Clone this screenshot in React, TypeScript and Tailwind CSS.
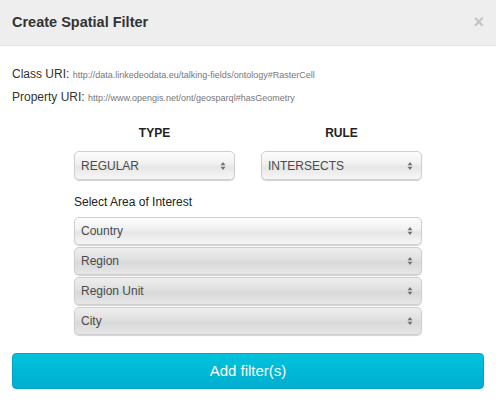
const font = { fontFamily: '"Liberation Sans", Arial, sans-serif' };

function Arrows() {
  return (
    <svg width="6" height="10" viewBox="0 0 6 10" className="shrink-0">
      <path d="M3 1 L5.4 4.2 L0.6 4.2 Z" fill="#707070" />
      <path d="M3 9 L5.4 5.8 L0.6 5.8 Z" fill="#707070" />
    </svg>
  );
}

function FakeSelect({ label, light = false, height = 'h-[28px]' }: { label: string; light?: boolean; height?: string }) {
  return (
    <div
      className={`${height} flex items-center justify-between pl-[6px] pr-[8px] rounded-[5px] border border-[#cfcfcf] shadow-[0_1px_1px_rgba(0,0,0,0.18)] ${
        light
          ? 'bg-[linear-gradient(#fdfdfd,#f0f0f0_45%,#e6e6e6_55%,#f6f6f6)]'
          : 'bg-[linear-gradient(#eeeeee,#e0e0e0_45%,#d9d9d9_55%,#e6e6e6)]'
      }`}
    >
      <span className="text-[12px] text-[#4a4a4a]">{label}</span>
      <Arrows />
    </div>
  );
}

export default function App() {
  return (
    <div className="w-[496px] h-[402px] bg-white text-[#333]" style={font}>
      {/* Header */}
      <div className="h-[46px] bg-[#eeeeee] border-b border-[#e2e2e2] flex items-center justify-between pl-3 pr-[12px]">
        <h2 className="text-[14.5px] font-bold text-[#333]">Create Spatial Filter</h2>
        <span className="text-[18px] leading-none text-[#c4c4c4] font-bold -mt-[2px]">×</span>
      </div>

      {/* URIs */}
      <div className="px-3 pt-[21px] flex flex-col gap-[8px]">
        <p className="text-[12px] leading-[14px]">
          Class URI: <span className="text-[9px] text-[#777]">http://data.linkedeodata.eu/talking-fields/ontology#RasterCell</span>
        </p>
        <p className="text-[12px] leading-[14px]">
          Property URI: <span className="text-[9px] text-[#777]">http://www.opengis.net/ont/geosparql#hasGeometry</span>
        </p>
      </div>

      {/* Form */}
      <div className="ml-[74px] w-[348px] pt-[21px]">
        <div className="grid grid-cols-[161px_161px] gap-x-[26px]">
          <div className="flex flex-col">
            <div className="text-[12px] font-bold text-center text-[#222] leading-[14px]">TYPE</div>
            <div className="mt-[11px]">
              <FakeSelect label="REGULAR" light height="h-[29px]" />
            </div>
          </div>
          <div className="flex flex-col">
            <div className="text-[12px] font-bold text-center text-[#222] leading-[14px]">RULE</div>
            <div className="mt-[11px]">
              <FakeSelect label="INTERSECTS" light height="h-[29px]" />
            </div>
          </div>
        </div>

        <div className="mt-[15px] text-[12px] leading-[14px] text-[#222]">Select Area of Interest</div>
        <div className="mt-[8px] flex flex-col gap-[2px]">
          <FakeSelect label="Country" light />
          <FakeSelect label="Region" />
          <FakeSelect label="Region Unit" />
          <FakeSelect label="City" />
        </div>
      </div>

      {/* Action */}
      <div className="px-3 pt-[18px]">
        <button className="w-[472px] h-[36px] rounded-[4px] bg-[linear-gradient(#00c3dc,#00aed0)] border border-[#00a7c6] text-white text-[15px]">
          Add filter(s)
        </button>
      </div>
    </div>
  );
}
